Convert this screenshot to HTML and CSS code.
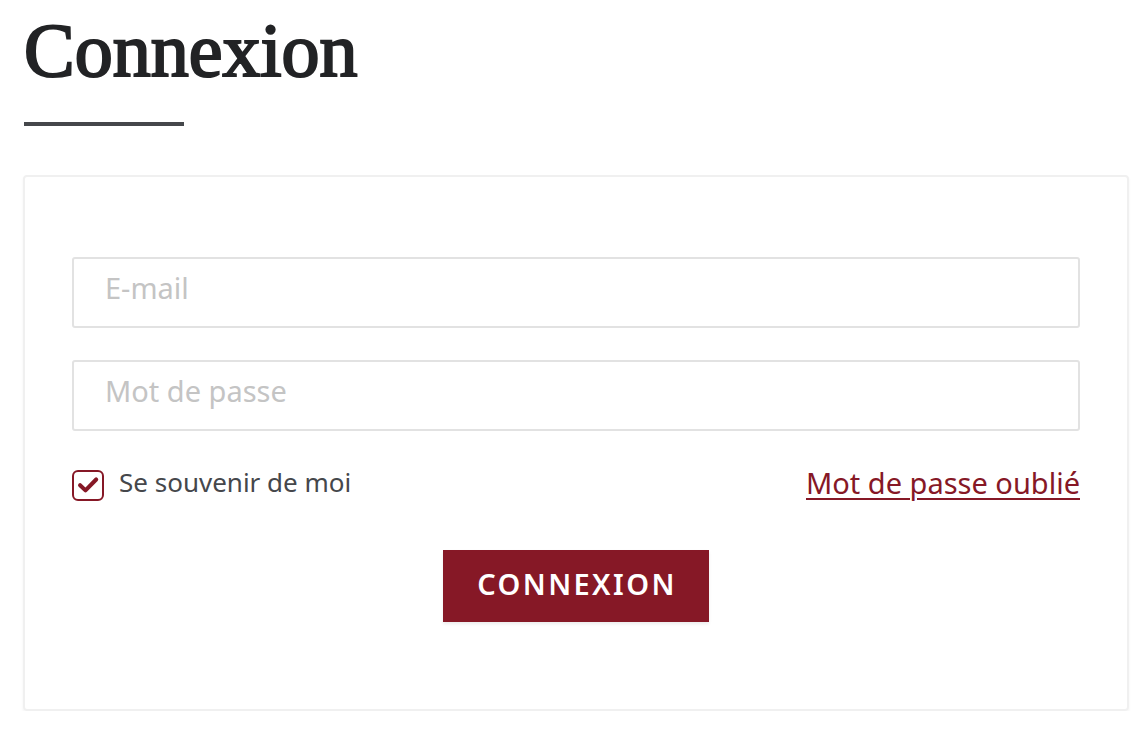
FILE: index.html
```html
<!DOCTYPE html>
<html lang="fr">
<head>
<meta charset="utf-8">
<title>Connexion</title>
<link rel="stylesheet" href="styles.css">
</head>
<body>
<main class="page">
  <h1 class="title">Connexion</h1>
  <div class="title-bar"></div>
  <form class="card">
    <input class="field" type="email" placeholder="E-mail">
    <input class="field" type="password" placeholder="Mot de passe">
    <div class="options">
      <label class="remember">
        <span class="check">
          <svg viewBox="0 0 20 20" width="24" height="24"><path d="M3.4 10.2 L7.9 14.5 L16.8 5.4" fill="none" stroke="#861826" stroke-width="3.4" stroke-linecap="round" stroke-linejoin="round"/></svg>
        </span>
        <span class="remember-text">Se souvenir de moi</span>
      </label>
      <a class="forgot" href="#">Mot de passe oublié</a>
    </div>
    <div class="actions">
      <button class="submit" type="button">CONNEXION</button>
    </div>
  </form>
</main>
</body>
</html>
```
FILE: styles.css
```css
html, body {
  margin: 0;
  padding: 0;
  background: #ffffff;
}
body {
  font-family: "Noto Sans", "Open Sans", sans-serif;
  color: #444;
}
.page {
  padding: 8px 19px 0 23px;
}
.title {
  margin: 0 0 0 1px;
  font-family: "Liberation Serif", "Times New Roman", serif;
  font-weight: normal;
  font-size: 76px;
  line-height: 84px;
  color: #222325;
  -webkit-text-stroke: 2.2px #222325;
}
.title-bar {
  width: 160px;
  height: 4px;
  background: #45474b;
  margin: 30px 0 0 1px;
}
.card {
  margin-top: 49px;
  width: 1106px;
  height: 536px;
  box-sizing: border-box;
  border: 2px solid #f0f0f0;
  border-radius: 4px;
  box-shadow: 0 2px 3px rgba(0,0,0,0.05);
  padding: 80px 47px 0 47px;
  display: flex;
  flex-direction: column;
}
.field {
  display: block;
  box-sizing: border-box;
  width: 100%;
  height: 71px;
  border: 2px solid #e2e2e2;
  border-radius: 3px;
  padding: 0 31px 10px 31px;
  font-family: "Noto Sans", "Open Sans", sans-serif;
  font-size: 29px;
  color: #444;
  outline: none;
  margin-bottom: 32px;
}
.field::placeholder {
  color: #c4c4c4;
}
.options {
  display: flex;
  justify-content: space-between;
  align-items: center;
  margin-top: 7px;
  height: 30px;
}
.remember {
  display: flex;
  align-items: center;
  gap: 15px;
}
.check {
  width: 32px;
  height: 31px;
  box-sizing: border-box;
  border: 2px solid #861826;
  border-radius: 6px;
  display: flex;
  align-items: center;
  justify-content: center;
}
.remember-text {
  font-size: 26px;
  color: #45474b;
  padding-bottom: 6px;
}
.forgot {
  font-size: 29px;
  color: #861826;
  text-decoration: underline;
  text-underline-offset: 4px;
  text-decoration-thickness: 2px;
  padding-bottom: 6px;
}
.actions {
  display: flex;
  justify-content: center;
  margin-top: 50px;
}
.submit {
  width: 266px;
  height: 72px;
  border: none;
  background: #861826;
  color: #fff;
  font-family: "Noto Sans", "Open Sans", sans-serif;
  font-weight: 600;
  font-size: 29px;
  letter-spacing: 2.4px;
  padding: 0 0 6px 2px;
  box-shadow: 0 2px 3px rgba(0,0,0,0.08);
  cursor: pointer;
}
```
